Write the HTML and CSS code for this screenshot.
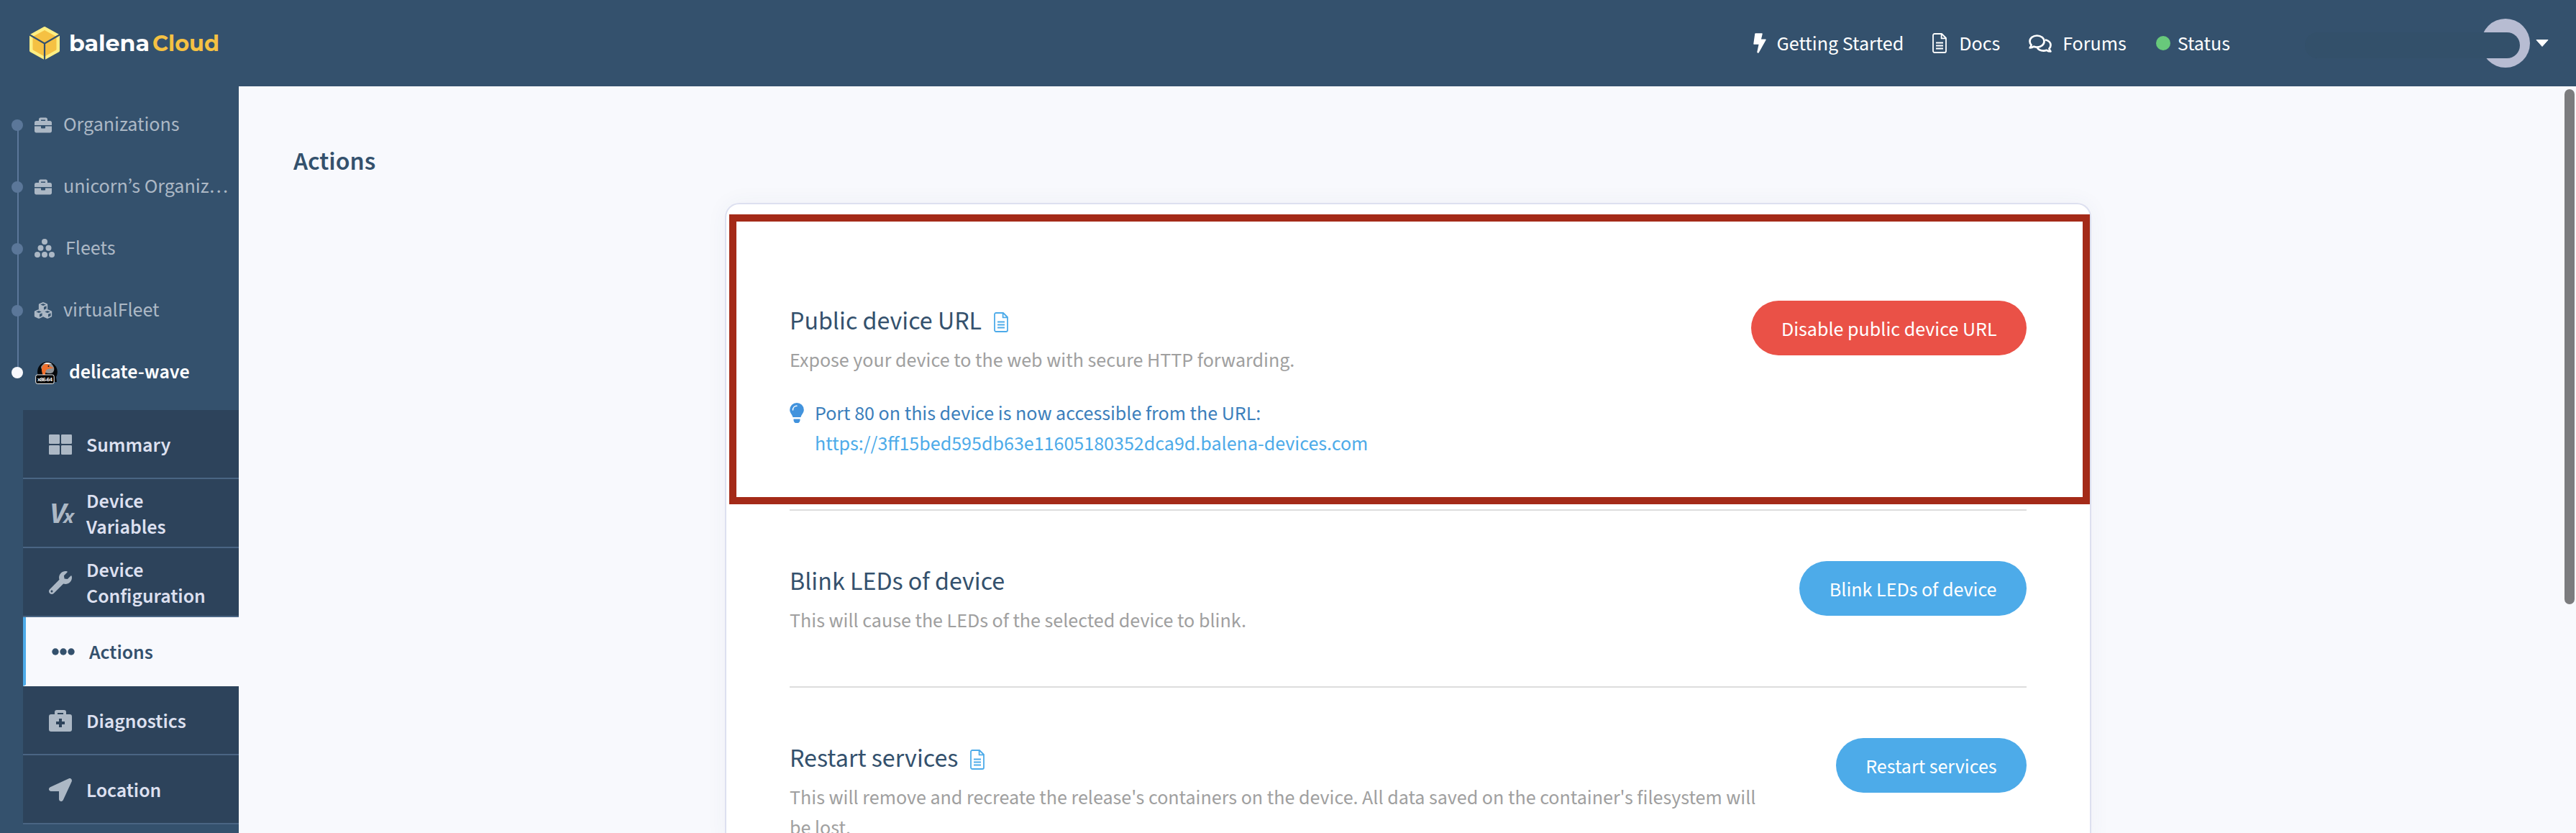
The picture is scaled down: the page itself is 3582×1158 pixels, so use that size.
FILE: index.html
```html
<!DOCTYPE html>
<html lang="en">
<head>
<meta charset="utf-8">
<title>Actions</title>
<link rel="stylesheet" href="styles.css">
</head>
<body>
<svg class="defs" width="0" height="0" aria-hidden="true">
  <symbol id="file" viewBox="0 0 20 28"><path d="M3 1h10l6 6v18a2 2 0 0 1-2 2H3a2 2 0 0 1-2-2V3a2 2 0 0 1 2-2zM12.6 1v6.4H19M5 13.5h10M5 17.5h10M5 21.5h10" fill="none" stroke="currentColor" stroke-width="1.8" stroke-linejoin="round"/></symbol>
  <symbol id="briefcase" viewBox="0 32 512 448"><path fill="currentColor" d="M320 336c0 8.84-7.16 16-16 16h-96c-8.84 0-16-7.16-16-16v-48H0v144c0 25.6 22.4 48 48 48h416c25.600 0 48-22.400 48-48V288H320v48zm144-208h-80V80c0-25.600-22.400-48-48-48H176c-25.600 0-48 22.400-48 48v48H48c-25.600 0-48 22.400-48 48v80h512v-80c0-25.600-22.400-48-48-48zm-144 0H192V96h128v32z"/></symbol>
  <symbol id="cube" viewBox="0 0 14 14"><path fill="currentColor" fill-rule="evenodd" d="M6.300.3Q7 0 7.700.3L12.600 2.300Q13.500 2.700 13.500 3.600V9.600Q13.500 10.500 12.700 10.900L7.700 13.300Q7 13.600 6.300 13.300L1.300 10.900Q.5 10.500.5 9.600V3.600Q.5 2.700 1.400 2.300zM7 2L3 3.600 7 5.300 11 3.600zM8 7V11.300L11.800 9.400V5.400z"/></symbol>
</svg>

<header class="topbar">
  <a class="logo">
    <svg width="44" height="48" viewBox="0 0 44 48">
      <path d="M22 3L41 13.500V34.500L22 45 3 34.500V13.500z" fill="#fdee83" stroke="#fdee83" stroke-width="4" stroke-linejoin="round"/>
      <path d="M22 6.500L38 15.200V33L22 42 6 33V15.200z" fill="#f5c143" stroke="#f5c143" stroke-linejoin="round"/>
      <path d="M1 12.300L22 24.500 43 12.300M22 24.500V48" fill="none" stroke="#34516d" stroke-width="2.200"/>
    </svg>
    <svg class="wordmark" width="212" height="44" viewBox="0 0 212 44">
      <text x="0" y="33" textLength="112" lengthAdjust="spacingAndGlyphs" fill="#fff">balena</text>
      <text x="116" y="33" textLength="93" lengthAdjust="spacingAndGlyphs" fill="#f5c143">Cloud</text>
    </svg>
  </a>
  <nav class="links">
    <a class="link bolt"><svg width="18" height="28" viewBox="0 0 18 28"><path d="M3 1H12L10 9.200H17L7 27 6 26.500 8.500 15H1z" fill="#fff" stroke="#fff" stroke-width="1.500" stroke-linejoin="round"/></svg><span>Getting Started</span></a>
    <a class="link docs"><svg width="20" height="28"><use href="#file"/></svg><span>Docs</span></a>
    <a class="link forums"><svg width="32" height="25" viewBox="0 0 32 25"><path d="M11.500 1.500c5.600 0 10 3.500 10 8s-4.400 8-10 8c-1.600 0-3-.3-4.300-.8-1.600 1.100-3.400 1.700-5.500 1.700 1-1.200 1.700-2.500 1.900-4C2.200 13 1.500 11.400 1.500 9.500c0-4.500 4.400-8 10-8zM23 7.200c4.400.9 7.500 3.900 7.500 7.500 0 1.900-.8 3.600-2.100 4.900.3 1.500 1 2.800 2 3.900-2.100 0-3.900-.6-5.500-1.700-1.300.5-2.700.8-4.300.8-4 0-7.500-1.900-9-4.700" fill="none" stroke="#fff" stroke-width="2.700" stroke-linejoin="round"/></svg><span>Forums</span></a>
    <a class="link status"><i class="dot"></i><span>Status</span></a>
  </nav>
  <div class="user">
    <i class="avatar"></i>
    <svg width="18" height="10" viewBox="0 0 18 10"><path d="M1 .5H17L9 9.500z" fill="#fff" stroke="#fff" stroke-linejoin="round"/></svg>
    <i class="username"></i>
  </div>
</header>

<div class="layout">
  <aside class="sidebar">
    <ul class="crumbs">
      <li><svg width="24" height="24"><use href="#briefcase"/></svg><span>Organizations</span></li>
      <li><svg width="24" height="24"><use href="#briefcase"/></svg><span>unicorn’s Organiz…</span></li>
      <li><svg class="fleets" width="28" height="27" viewBox="0 0 28 27" fill="currentColor"><circle cx="14" cy="4" r="4"/><circle cx="8.500" cy="12.700" r="4"/><circle cx="19.500" cy="12.700" r="4"/><circle cx="4" cy="22" r="4"/><circle cx="14" cy="22" r="4"/><circle cx="24" cy="22" r="4"/></svg><span>Fleets</span></li>
      <li><svg width="24" height="24" viewBox="0 0 24 24"><use href="#cube" x="5.300" y="0" width="13.400" height="13.400"/><use href="#cube" x="-.7" y="10" width="13.400" height="13.400"/><use href="#cube" x="11.300" y="10" width="13.400" height="13.400"/></svg><span>virtualFleet</span></li>
      <li class="current"><svg width="32" height="32" viewBox="0 0 32 32"><path d="M18 1a14 14 0 0 1 12 21l1 7H18A14 14 0 0 1 18 1z" fill="#05080b"/><path d="M9 8C14-.5 24 .5 27 9c1 4-1 8-5 8-6 0-12-1-13-9z" fill="#8d9296"/><path d="M12 4C17 .5 22 2 24 4z" fill="#eceeef"/><path d="M12 20C8 12 10 4 17 4c4 0 4 3 6 4l4 1.500-5 1c-5 0-7 2-7 8z" fill="#f0702c"/><circle cx="19.500" cy="7" r="1" fill="#111"/><rect x="1.700" y="19" width="25.500" height="12.500" rx="2.500" fill="#000" stroke="#f3f3f3"/><text class="arch" x="14.400" y="28" text-anchor="middle" textLength="21">x86-64</text></svg><span>delicate-wave</span></li>
    </ul>
    <ul class="menu">
      <li><svg width="32" height="28" viewBox="0 0 32 28" fill="currentColor"><rect width="15" height="13" rx="1.300"/><rect x="17" width="15" height="13" rx="1.300"/><rect y="15" width="15" height="13" rx="1.300"/><rect x="17" y="15" width="15" height="13" rx="1.300"/></svg><span>Summary</span></li>
      <li><svg class="vx" width="36" height="44" viewBox="0 0 36 44"><text x="1" y="35" font-size="42" textLength="23" lengthAdjust="spacingAndGlyphs">V</text><text x="20" y="35" font-size="28" textLength="15" lengthAdjust="spacingAndGlyphs">x</text></svg><span>Device Variables</span></li>
      <li><svg width="32" height="32" viewBox="0 0 512 512"><path fill="currentColor" d="M507.730 109.100c-2.240-9.030-13.540-12.090-20.120-5.510l-74.360 74.360-67.880-11.310-11.310-67.880 74.360-74.360c6.620-6.620 3.430-17.900-5.660-20.160-47.380-11.740-99.550.91-136.580 37.930-39.640 39.640-50.550 97.100-34.050 147.200L18.740 402.760c-24.990 24.990-24.990 65.510 0 90.500 24.990 24.990 65.510 24.990 90.500 0l213.210-213.210c50.120 16.710 107.470 5.680 147.370-34.220 37.070-37.070 49.700-89.320 37.910-136.730zM64 472c-13.250 0-24-10.750-24-24 0-13.260 10.750-24 24-24s24 10.740 24 24c0 13.250-10.750 24-24 24z"/></svg><span>Device Configuration</span></li>
      <li class="active"><svg width="32" height="10" viewBox="0 0 32 10" fill="currentColor"><circle cx="5" cy="5" r="4.700"/><circle cx="16" cy="5" r="4.700"/><circle cx="27" cy="5" r="4.700"/></svg><span>Actions</span></li>
      <li><svg width="32" height="30" viewBox="0 0 32 30"><path fill="currentColor" fill-rule="evenodd" d="M8 6V3a3 3 0 0 1 3-3H21a3 3 0 0 1 3 3V6h5a3 3 0 0 1 3 3V27a3 3 0 0 1-3 3H3a3 3 0 0 1-3-3V9a3 3 0 0 1 3-3zM12 4V6h8V4zM14 12v4h-4v4h4v4h4v-4h4v-4h-4v-4z"/></svg><span>Diagnostics</span></li>
      <li><svg width="32" height="32" viewBox="0 0 512 512"><path fill="currentColor" d="M444.520 3.520L28.740 195.420c-47.970 22.390-31.980 92.750 19.190 92.750h175.910v175.910c0 51.170 70.360 67.170 92.750 19.190l191.900-415.780c15.990-38.390-25.590-79.970-63.970-63.970z"/></svg><span>Location</span></li>
    </ul>
  </aside>

  <main class="content">
    <h1>Actions</h1>
    <div class="card">
      <section class="row first">
        <div class="text">
          <h2>Public device URL<svg width="20" height="28"><use href="#file"/></svg></h2>
          <p>Expose your device to the web with secure HTTP forwarding.</p>
          <div class="tip">
            <svg width="20" height="28" viewBox="0 0 20 28"><path d="M10 0a9.800 9.800 0 0 1 9.800 9.800c0 4.200-3.200 6.200-4.300 10.200H4.500C3.400 16 .2 14 .2 9.800A9.800 9.800 0 0 1 10 0zM5.500 22.500h9V24c0 2-1.500 4-3 4h-3c-1.500 0-3-2-3-4z" fill="#4293dd"/><path d="M4.500 10c0-3.200 2.300-5.700 5.500-5.700" fill="none" stroke="#fff" stroke-width="1.500" stroke-linecap="round"/></svg>
            <div>Port 80 on this device is now accessible from the URL:<br><a>https://3ff15bed595db63e11605180352dca9d.balena-devices.com</a></div>
          </div>
        </div>
        <button class="btn danger">Disable public device URL</button>
      </section>
      <section class="row">
        <div class="text">
          <h2>Blink LEDs of device</h2>
          <p>This will cause the LEDs of the selected device to blink.</p>
        </div>
        <button class="btn">Blink LEDs of device</button>
      </section>
      <section class="row last">
        <div class="text">
          <h2>Restart services<svg width="20" height="28"><use href="#file"/></svg></h2>
          <p>This will remove and recreate the release's containers on the device. All data saved on the container's filesystem will be lost.</p>
        </div>
        <button class="btn">Restart services</button>
      </section>
      <i class="highlight"></i>
    </div>
    <i class="scrollbar"></i>
  </main>
</div>
</body>
</html>
```
FILE: styles.css
```css
* { box-sizing: border-box; }
body {
  margin: 0;
  height: 1158px;
  overflow: hidden;
  display: flex;
  flex-direction: column;
  background: #f8f9fd;
  font-family: "Source Sans Pro", "Source Sans 3", "Noto Sans CJK SC", sans-serif;
  font-size: 28px;
  line-height: 42px;
  color: #34516d;
}
.defs { position: absolute; }
svg { flex: none; display: block; overflow: visible; }
ul { list-style: none; margin: 0; padding: 0; }
h1, h2, p { margin: 0; }

.topbar {
  flex: none;
  height: 120px;
  display: flex;
  align-items: center;
  padding: 0 38px 0 40px;
  background: #34516d;
  color: #fff;
}
.logo { display: flex; align-items: center; gap: 12px; margin-right: auto; }
.wordmark { font-family: "Gilroy", "Montserrat", "Poppins", "Lato", sans-serif; font-weight: 700; font-size: 31px; }
.links { display: flex; gap: 40px; margin-right: 349px; }
.link { display: flex; align-items: center; white-space: nowrap; }
.link span { padding-top: 2px; }
.bolt { gap: 15px; }
.forums { gap: 15px; }
.docs { gap: 17px; }
.status { gap: 10px; margin-left: 1px; }
.dot { width: 20px; height: 20px; border-radius: 50%; background: #68c97b; }
.user { position: relative; display: flex; align-items: center; gap: 8px; }
.avatar { width: 68px; height: 68px; border-radius: 50%; background: #b7bcd2; }
.username {
  position: absolute;
  right: 40px;
  top: 19px;
  width: 299px;
  height: 36px;
  border-radius: 18px;
  background: #33506a;
}

.layout { flex: 1; display: flex; min-height: 0; }
.sidebar { flex: none; width: 332px; padding-top: 11px; background: #34516d; }
.crumbs { position: relative; color: #acb8c5; }
.crumbs::before {
  content: "";
  position: absolute;
  left: 24px;
  top: 43px;
  width: 2px;
  height: 344px;
  background: #5b7799;
}
.crumbs li {
  height: 86px;
  display: flex;
  align-items: center;
  gap: 16px;
  padding-left: 16px;
  white-space: nowrap;
}
.crumbs li::before {
  content: "";
  position: relative;
  width: 16px;
  height: 16px;
  border-radius: 50%;
  background: #5b7799;
}
.crumbs span { padding-bottom: 2px; }
.crumbs svg { margin-bottom: 1px; }
.crumbs .fleets { margin-right: -1px; }
.crumbs .current { color: #fff; font-weight: 600; }
.crumbs .current::before { background: #f8f9fd; }
.arch { font: 700 8px "Liberation Sans", sans-serif; fill: #fff; }

.menu { margin: 9px 0 0 32px; color: #dde0f0; font-weight: 600; line-height: 36px; }
.menu li {
  height: 96px;
  display: flex;
  align-items: center;
  gap: 20px;
  padding: 2px 30px 0 36px;
  background: #2d435b;
  border-bottom: 2px solid #4a6583;
}
.menu span { padding-top: 2px; }
.menu svg { color: #acb8c5; }
.vx { margin-right: -4px; fill: #acb8c5; font-weight: 700; font-style: italic; }
.menu .active { background: #f8f9fd; color: #34516d; border-bottom-color: #f8f9fd; border-left: 4px solid #4dabe9; }
.menu .active svg { color: #34516d; }

.content { position: relative; flex: 1; padding: 78px 0 0 76px; overflow: hidden; }
h1 { font-size: 36px; font-weight: 600; line-height: 54px; }
.card {
  position: relative;
  width: 1900px;
  margin: 30px 0 0 600px;
  padding: 0 88px;
  background: #fff;
  border: 2px solid #dde0f0;
  border-bottom: 0;
  border-radius: 20px 20px 0 0;
  box-shadow: 0 0 30px rgba(52, 81, 109, .05);
}
.row {
  display: flex;
  justify-content: space-between;
  align-items: flex-start;
  padding: 70px 0;
  border-bottom: 2px solid #ddd;
}
.row.first { padding-top: 134px; }
.row.last { padding-bottom: 0; border: 0; }
.text { width: 1360px; }
h2 { display: flex; align-items: center; gap: 17px; padding-top: 2px; font-size: 36px; font-weight: 400; line-height: 54px; }
h2 svg { color: #4dabe9; margin-top: 2px; }
.text p { margin-top: 6px; color: #a0a0a0; }
.tip { display: flex; gap: 15px; margin-top: 32px; color: #3c7fbc; }
.tip svg { margin-top: 6px; }
.tip a { color: #4dabe9; }
.btn {
  height: 76px;
  padding: 3px 41.5px 0;
  border: 0;
  border-radius: 38px;
  background: #4dabe9;
  color: #fff;
  font: inherit;
  white-space: nowrap;
}
.danger { background: #ea5147; }
.highlight {
  position: absolute;
  left: 4px;
  top: 14px;
  width: 1892px;
  height: 403px;
  border: 10px solid #a42a18;
}
.scrollbar {
  position: absolute;
  right: 2px;
  top: 4px;
  width: 14px;
  height: 716px;
  border-radius: 7px;
  background: #7c7c7e;
}
```
